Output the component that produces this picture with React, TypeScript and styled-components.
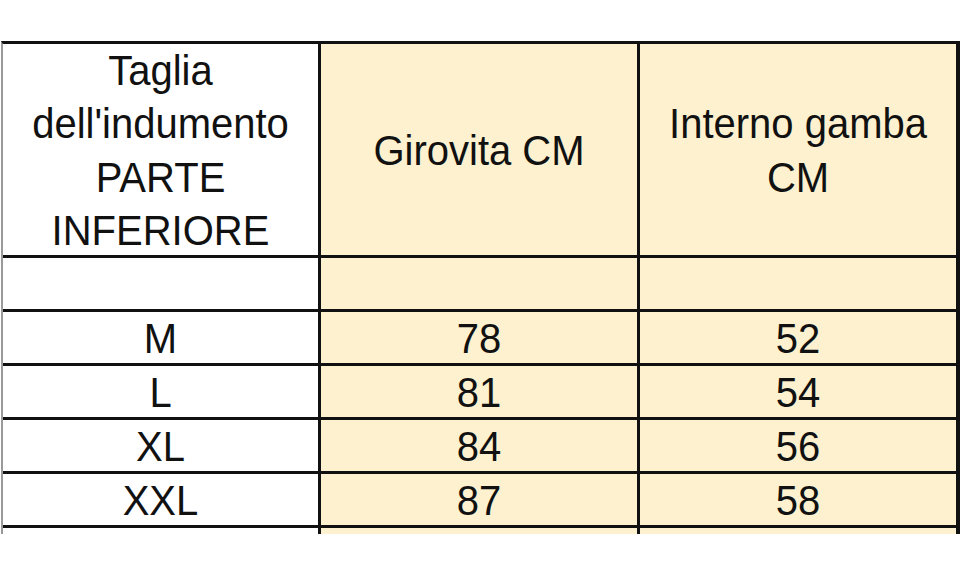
import styled, { createGlobalStyle } from 'styled-components';

const GlobalStyle = createGlobalStyle`
  html, body {
    margin: 0;
    padding: 0;
    background: #fff;
  }
  body {
    font-family: 'Liberation Sans', Arial, sans-serif;
  }
`;

const Page = styled.div`
  width: 960px;
  height: 576px;
  overflow: hidden;
  background: #fff;
  padding-top: 41px;
  padding-left: 1px;
  box-sizing: border-box;
`;

const Table = styled.div`
  display: grid;
  grid-template-columns: 315px 316px 316px;
  grid-template-rows: 211px repeat(5, 51px) 6px;
  gap: 3px;
  background: #111;
  border-top: 3px solid #111;
  border-left: 2px solid #9a9a9a;
  border-right: 4px solid #111;
  width: max-content;
`;

const Cell = styled.div<{ $tint?: boolean }>`
  background: ${(p) => (p.$tint ? '#fdf1cf' : '#fff')};
  color: #111;
  font-size: 40px;
  line-height: 50px;
  display: flex;
  align-items: center;
  justify-content: center;
  text-align: center;
  white-space: pre-line;
`;

// the source glyphs are a touch taller than Arial's
const Label = styled.span`
  display: inline-block;
  transform: scaleY(1.07);
`;

const header = ["Taglia\ndell'indumento\nPARTE\nINFERIORE", 'Girovita CM', 'Interno gamba\nCM'];

const rows: [string, string, string][] = [
  ['', '', ''],
  ['M', '78', '52'],
  ['L', '81', '54'],
  ['XL', '84', '56'],
  ['XXL', '87', '58'],
  ['', '', ''],
];

export default function App() {
  return (
    <>
      <GlobalStyle />
      <Page>
        <Table>
          {header.map((h, i) => (
            <Cell key={`h${i}`} $tint={i > 0}>
              <Label>{h}</Label>
            </Cell>
          ))}
          {rows.map((r, ri) =>
            r.map((v, ci) => (
              <Cell key={`${ri}-${ci}`} $tint={ci > 0}>
                {v && <Label>{v}</Label>}
              </Cell>
            ))
          )}
        </Table>
      </Page>
    </>
  );
}
